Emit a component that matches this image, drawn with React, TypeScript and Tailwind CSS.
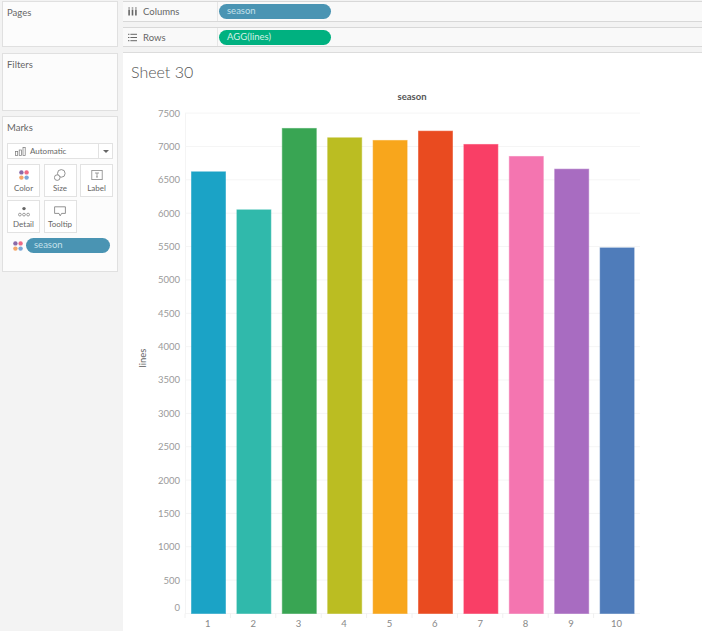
import React from 'react';

const bars = [
    { season: 1, value: 6620, color: '#1ba3c6' },
    { season: 2, value: 6050, color: '#30b9ab' },
    { season: 3, value: 7270, color: '#39a553' },
    { season: 4, value: 7130, color: '#bbbd22' },
    { season: 5, value: 7090, color: '#f8a61c' },
    { season: 6, value: 7230, color: '#e94b20' },
    { season: 7, value: 7030, color: '#f93f66' },
    { season: 8, value: 6850, color: '#f475b0' },
    { season: 9, value: 6660, color: '#a86cc1' },
    { season: 10, value: 5480, color: '#4f7cba' },
];

const ticks = [7500, 7000, 6500, 6000, 5500, 5000, 4500, 4000, 3500, 3000, 2500, 2000, 1500, 1000, 500, 0];

const baseY = 560.5; // svg coords, svg starts at y=53 on the page
const scale = 33.36 / 500;
const toY = (v: number) => baseY - v * scale;

const Dots = () => (
    <svg width="10" height="10" viewBox="0 0 10 10">
        <circle cx="2.4" cy="2.4" r="2.2" fill="#8a6aa8" />
        <circle cx="7.6" cy="2.4" r="2.2" fill="#ee6a86" />
        <circle cx="2.4" cy="7.6" r="2.2" fill="#f4a769" />
        <circle cx="7.6" cy="7.6" r="2.2" fill="#7ba6d8" />
    </svg>
);

const SizeIcon = () => (
    <svg width="12" height="12" viewBox="0 0 12 12" fill="none" stroke="#777" strokeWidth="0.8">
        <circle cx="7.3" cy="4.4" r="3.8" />
        <circle cx="3.2" cy="8.6" r="2.8" fill="#fff" />
    </svg>
);

const LabelIcon = () => (
    <svg width="12" height="12" viewBox="0 0 12 12" fill="none" stroke="#888" strokeWidth="0.8">
        <rect x="0.8" y="1.4" width="10.4" height="9.2" />
        <path d="M4 4h4M6 4v4M5 8h2" />
    </svg>
);

const DetailIcon = () => (
    <svg width="12" height="11" viewBox="0 0 12 11" fill="none" stroke="#777" strokeWidth="0.7">
        <circle cx="6" cy="2.6" r="1.7" fill="#666" stroke="none" />
        <circle cx="1.9" cy="8.6" r="1.4" />
        <circle cx="6" cy="8.6" r="1.4" />
        <circle cx="10.1" cy="8.6" r="1.4" />
    </svg>
);

const TooltipIcon = () => (
    <svg width="12" height="11" viewBox="0 0 12 11" fill="none" stroke="#777" strokeWidth="0.8">
        <path d="M0.6 0.8h10.8v6.6H7.6L6.2 9.8 5 7.4H0.6z" />
    </svg>
);

const Tile = ({ label, icon }: { label: string; icon: React.ReactNode }) => (
    <div className="w-[33px] h-[33px] border border-[#e2e2e2] bg-white flex flex-col items-center justify-between pt-[3px] pb-[2px]">
        <div className="h-[14px] flex items-center">{icon}</div>
        <div className="text-[8px] leading-[11px] text-[#666]">{label}</div>
    </div>
);

const Shelf = ({ label, icon, pill, pillColor, height }: { label: string; icon: React.ReactNode; pill: string; pillColor: string; height: string }) => (
    <div className={`bg-[#f9f9f9] border-y border-[#d8d8d8] flex items-center ${height}`}>
        <div className="w-[95px] h-full flex items-center gap-[6px] pl-[5px] border-r border-[#e6e6e6] text-[9.5px] text-[#666]">
            {icon}
            <span className="pt-[2px]">{label}</span>
        </div>
        <div className={`w-[112px] h-[15px] ml-[1px] rounded-full flex items-center pl-2 text-[9.5px] ${pillColor}`}>
            {pill}
        </div>
    </div>
);

const App = () => {
    return (
        <div className="w-[702px] h-[631px] overflow-hidden bg-[#f3f3f3] flex font-['Lato','Open_Sans',sans-serif]">
            <div className="w-[123px] shrink-0 pl-[2px] pr-[5px] pt-px flex flex-col">
                <div className="h-[46px] bg-[#fcfcfc] border border-[#e0e0e0] px-[4px] pt-[4px] text-[9.5px] text-[#666]">Pages</div>
                <div className="h-[58px] mt-[6px] bg-[#fcfcfc] border border-[#e0e0e0] px-[4px] pt-[4px] text-[9.5px] text-[#666]">Filters</div>
                <div className="h-[156px] mt-[5px] bg-[#fcfcfc] border border-[#e0e0e0] px-[4px] pt-[4px]">
                    <div className="text-[9.5px] leading-[14px] text-[#666]">Marks</div>
                    <div className="h-4 mt-[8px] border border-[#e2e2e2] bg-white flex items-center text-[8px] text-[#666]">
                        <div className="flex-1 flex items-center gap-[4px] pl-[7px]">
                            <svg width="11" height="9" viewBox="0 0 11 9" fill="none" stroke="#777" strokeWidth="0.7">
                                <rect x="0.5" y="4.5" width="2.2" height="4" />
                                <rect x="4.2" y="3" width="2.2" height="5.5" />
                                <rect x="8" y="0.5" width="2.2" height="8" />
                            </svg>
                            <span>Automatic</span>
                        </div>
                        <div className="w-[14px] h-full border-l border-[#e2e2e2] flex items-center justify-center">
                            <div className="w-0 h-0 border-x-[3px] border-x-transparent border-t-[3px] border-t-[#666]" />
                        </div>
                    </div>
                    <div className="mt-[5px] flex flex-wrap gap-x-[3.5px] gap-y-[3px]">
                        <Tile label="Color" icon={<Dots />} />
                        <Tile label="Size" icon={<SizeIcon />} />
                        <Tile label="Label" icon={<LabelIcon />} />
                        <Tile label="Detail" icon={<DetailIcon />} />
                        <Tile label="Tooltip" icon={<TooltipIcon />} />
                    </div>
                    <div className="mt-[5px] flex items-center gap-[3px] pl-[6px]">
                        <Dots />
                        <div className="w-[84px] h-[15px] rounded-full bg-[#4a94b3] pl-2 flex items-center text-[9.5px] text-[#c4e0ea]">season</div>
                    </div>
                </div>
            </div>
            <div className="flex-1 flex flex-col pt-px">
                <Shelf
                    label="Columns"
                    pill="season"
                    pillColor="bg-[#4a94b3] text-[#c4e0ea]"
                    height="h-[21px]"
                    icon={
                        <svg width="9" height="9" viewBox="0 0 9 9" fill="#666">
                            <rect x="0.3" y="2.5" width="1.6" height="6" />
                            <rect x="3.7" y="2.5" width="1.6" height="6" />
                            <rect x="7.1" y="2.5" width="1.6" height="6" />
                            <rect x="0.3" y="0.5" width="1.6" height="1" />
                            <rect x="3.7" y="0.5" width="1.6" height="1" />
                            <rect x="7.1" y="0.5" width="1.6" height="1" />
                        </svg>
                    }
                />
                <div className="h-[5px]" />
                <Shelf
                    label="Rows"
                    pill="AGG(lines)"
                    pillColor="bg-[#00b180] text-[#d2f0e6]"
                    height="h-[20px]"
                    icon={
                        <svg width="9" height="9" viewBox="0 0 9 9" fill="#666">
                            <rect x="0" y="0.8" width="1.4" height="1" />
                            <rect x="2.4" y="0.8" width="6.6" height="1" />
                            <rect x="0" y="4" width="1.4" height="1" />
                            <rect x="2.4" y="4" width="6.6" height="1" />
                            <rect x="0" y="7.2" width="1.4" height="1" />
                            <rect x="2.4" y="7.2" width="6.6" height="1" />
                        </svg>
                    }
                />
                <div className="h-[5px]" />
                <div className="relative flex-1 bg-white border-t border-[#dcdcdc]">
                    <div className="pl-2 pt-[8px] text-[16px] leading-[22px] font-light text-[#555]">Sheet 30</div>
                    <svg className="absolute left-0 top-0" width="579" height="578" viewBox="123 0 579 578" fontFamily="Lato, 'Open Sans', sans-serif">
                        <text x="412" y="47" textAnchor="middle" fontSize="9.5" fontWeight="700" fill="#555">season</text>
                        <text transform="translate(146 305) rotate(-90)" textAnchor="middle" fontSize="9.5" fill="#666">lines</text>
                        <line x1="185.5" x2="185.5" y1="60" y2="561" stroke="#f4f4f4" />
                        {ticks.map((t) => (
                            <g key={t}>
                                <line x1="185" x2="640" y1={toY(t)} y2={toY(t)} stroke="#f5f5f5" />
                                <text x="180" y={t === 0 ? 557.5 : toY(t) + 3.5} textAnchor="end" fontSize="9.5" fill="#9a9a9a">{t}</text>
                            </g>
                        ))}
                        {bars.map((b, i) => (
                            <g key={b.season}>
                                <rect
                                    x={191.5 + i * 45.4}
                                    y={toY(b.value)}
                                    width={34}
                                    height={b.value * scale}
                                    fill={b.color}
                                    stroke={b.color}
                                    strokeOpacity="0.55"
                                />
                                <line x1={185 + i * 45.4} x2={185 + i * 45.4} y1="560.5" y2="565" stroke="#f0f0f0" />
                                <text x={207.8 + i * 45.4} y="573.5" textAnchor="middle" fontSize="9.5" fill="#888">{b.season}</text>
                            </g>
                        ))}
                    </svg>
                </div>
            </div>
        </div>
    );
};

export default App;
